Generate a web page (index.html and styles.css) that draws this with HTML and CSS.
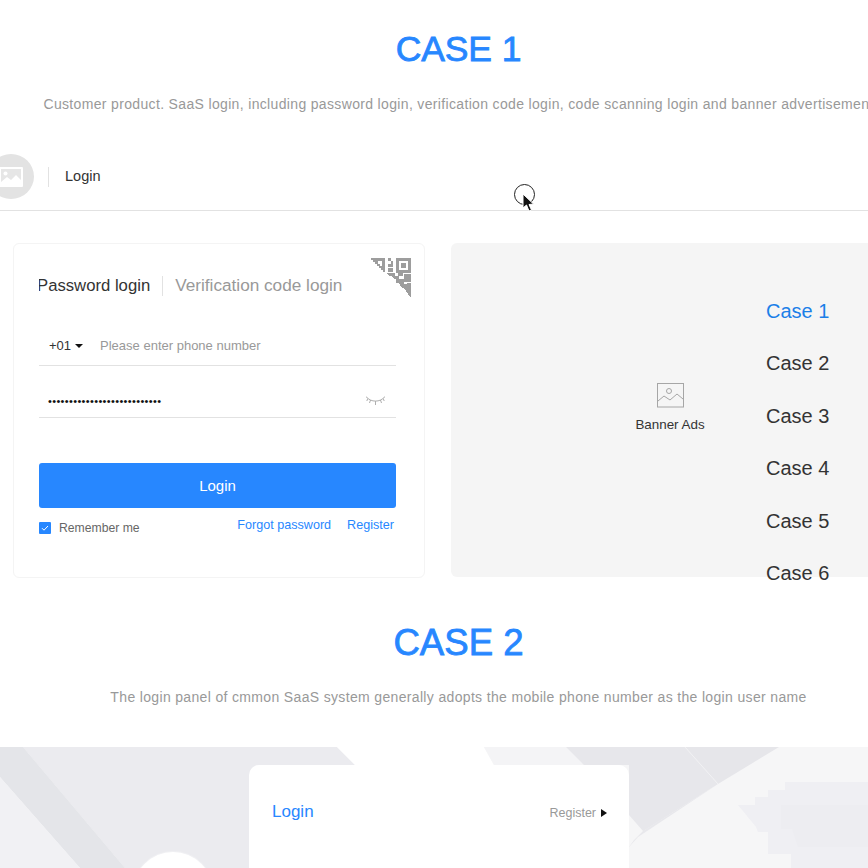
FILE: index.html
```html
<!DOCTYPE html>
<html lang="en">
<head>
<meta charset="utf-8">
<title>Login cases</title>
<link rel="stylesheet" href="styles.css">
</head>
<body>
<div class="page">
  <div class="canvas">
    <header class="case-head case-head-one">
      <h1 class="case-title">CASE 1</h1>
      <p class="case-sub">Customer product. SaaS login, including password login, verification code login, code scanning login and banner advertisement</p>
    </header>

    <div class="topbar">
      <span class="logo">
        <svg width="24" height="20" viewBox="0 0 24 20"><rect width="24" height="20" rx="1" fill="#fff"/><rect x="2" y="2" width="20" height="16" fill="#e6e6e6"/><circle cx="6.500" cy="6.500" r="2" fill="#fff"/><path d="M2 15l6-5 4 3 5-5 5 5v5H2z" fill="#fff"/></svg>
      </span>
      <span class="topbar-sep"></span>
      <span class="topbar-label">Login</span>
    </div>

    <div class="panels">
      <section class="card">
        <svg class="qr" width="40" height="40" viewBox="0 0 40 40" shape-rendering="crispEdges">
          <path fill="#9d9d9d" d="M0 0h14v14h-2v-2h-2v-2H8V8H6V6H4V4H2V2H0z"/>
          <path fill="#fff" d="M7 3h4v5H9V6H7z"/>
          <path fill="#9d9d9d" d="M17 0h3v3h-3zM20 3h2v6h-2zM17 6h3v3h-3zM17 10h5v4h-5z"/>
          <path fill="#9d9d9d" fill-rule="evenodd" d="M25 0h15v15H25zM28 3v9h9V3z"/>
          <path fill="#9d9d9d" d="M30 5h5v5h-5z"/>
          <path fill="#9d9d9d" d="M16 15h8v3h-6zM20 18h8v3h-5zM27 15h5v3h-5zM33 16h7v8h-7zM25 21h8v4h-8zM28 25h12v5H31zM33 30h7v6h-3zM37 36h3v4z"/>
          <path fill="#fff" d="M29 18h3v2h-3zM33 24h3v2h-3z"/>
        </svg>
        <div class="tabs">
          <span class="tab tab-active">Password login</span>
          <span class="tab-sep"></span>
          <span class="tab">Verification code login</span>
        </div>
        <div class="field field-phone">
          <span class="dial">+01</span>
          <span class="caret"></span>
          <span class="placeholder">Please enter phone number</span>
        </div>
        <div class="field field-pass">
          <span class="dots">•••••••••••••••••••••••••••</span>
          <svg class="eye" width="19" height="10" viewBox="0 0 19 10" fill="none" stroke="#9a9a9a" stroke-width=".8"><path d="M1 1.500c2 2.200 5 3.600 8.500 3.600s6.500-1.400 8.500-3.600M1 1.500L0 .8M18 1.500l1-.8M4.500 4l-1 3M9.500 5.200V9M14.500 4l1 3M1.800 2.500L.8 5M17.200 2.500L18.200 5"/></svg>
        </div>
        <button class="login-btn" type="button">Login</button>
        <div class="card-foot">
          <span class="check">
            <svg width="12" height="12" viewBox="0 0 12 12" fill="none" stroke="#fff" stroke-width="1"><path d="M3 6.200l2 2 4-4.200"/></svg>
          </span>
          <span class="remember">Remember me</span>
          <a class="link link-forgot">Forgot password</a>
          <a class="link">Register</a>
        </div>
      </section>

      <section class="banner">
        <div class="banner-ads">
          <svg width="27" height="25" viewBox="0 0 27 25" fill="none" stroke="#a6a6a6" stroke-width="1"><rect x=".5" y=".5" width="26" height="23.500"/><circle cx="12" cy="8" r="2.500"/><path d="M1 18l6-5 6 4 7-6 6 5"/></svg>
          <span class="banner-label">Banner Ads</span>
        </div>
        <ul class="case-list">
          <li class="case-item case-item-active">Case 1</li>
          <li class="case-item">Case 2</li>
          <li class="case-item">Case 3</li>
          <li class="case-item">Case 4</li>
          <li class="case-item">Case 5</li>
          <li class="case-item">Case 6</li>
        </ul>
      </section>
    </div>

    <header class="case-head case-head-two">
      <h1 class="case-title">CASE 2</h1>
      <p class="case-sub">The login panel of cmmon SaaS system generally adopts the mobile phone number as the login user name</p>
    </header>

    <div class="hero">
      <svg class="hero-bg" width="868" height="121" viewBox="0 0 868 121">
        <rect width="868" height="121" fill="#f6f6f7"/>
        <path d="M0 0h337l18 18v103H125L23 0z" fill="#ebebef"/>
        <path d="M0 0h23l102 121H80L0 30z" fill="#e4e5e9"/>
        <path d="M0 30l80 91H0z" fill="#f1f1f4"/>
        <path d="M337 0h147l10 18H355z" fill="#fff"/>
        <path d="M484 0h82l18 18h-90z" fill="#f4f4f6"/>
        <path d="M566 0h119l33 37-89 56V18h-45z" fill="#e7e7eb"/>
        <path d="M685 0h94l-61 37z" fill="#e6e6ea"/>
        <path d="M718 37l-80 53-9 10V68l14 16z" fill="#e8e8ec"/>
        <path d="M629 68l14 16-9 9-5 7z" fill="#f6f6f7"/>
        <path d="M685 0l33 37" stroke="#f1f1f3" stroke-width="1" fill="none"/>
        <path d="M738 58h17v-8h13v-7h17v-8h83v86h-77v-14h-23V85h-10l-2-5z" fill="#efeff3"/>
        <path d="M781 58h87v42h-70l-6-18h-11z" fill="#ededf1"/>
        <circle cx="173" cy="145" r="41" fill="#f0f0f3"/>
        <circle cx="173" cy="145" r="40" fill="#fff"/>
      </svg>
      <section class="login-panel">
        <span class="panel-title">Login</span>
        <span class="panel-reg">Register</span>
        <span class="panel-arrow"></span>
      </section>
    </div>
  </div>

  <div class="cursor">
    <span class="cursor-ring"></span>
    <svg class="cursor-arrow" width="14" height="20" viewBox="0 0 14 20"><path d="M2 1l0 14 3.500-3 2.500 6 2.500-1-2.500-5.500 4.500-.5z" fill="#111" stroke="#fff" stroke-width="1"/></svg>
  </div>
</div>
</body>
</html>
```
FILE: styles.css
```css
* { box-sizing: border-box; }
html, body { margin: 0; padding: 0; background: #fff; }
body { font-family: "Liberation Sans", Arial, sans-serif; color: #333; }
.page { position: relative; width: 868px; height: 868px; overflow: hidden; }
.canvas { width: 917px; }

.case-head { text-align: center; }
.case-head-one { padding-top: 29px; height: 153px; }
.case-head-two { padding-top: 44px; height: 169px; }
.case-title { margin: 0; font-size: 35.500px; line-height: 41px; letter-spacing: -.1px; font-weight: 400; color: #2787ff; -webkit-text-stroke: .8px #2787ff; }
.case-head-two .case-title { font-size: 36.600px; letter-spacing: 0; }
.case-sub { margin: 0; padding-top: 24px; font-size: 14px; line-height: 20px; color: #999; white-space: nowrap; letter-spacing: .34px; }

.topbar { display: flex; align-items: center; height: 58px; margin-bottom: 32px; border-bottom: 1px solid #e2e2e2; padding: 1px 0 11px; width: 868px; }
.logo { flex: none; display: flex; align-items: center; justify-content: center; width: 46px; height: 45px; margin-left: -12px; border-radius: 50%; background: #e3e3e3; }
.topbar-sep { width: 1px; height: 20px; margin-left: 14px; background: #e2e2e2; }
.topbar-label { margin: 0 0 2px 16px; font-size: 14.500px; color: #333; }

.panels { display: flex; gap: 26px; padding-left: 13px; }
.card { position: relative; flex: none; width: 412px; height: 335px; padding: 0 28px 0 25px; border: 1px solid #f4f4f4; border-radius: 6px; background: #fff; }
.qr { position: absolute; top: 14px; right: 13px; }
.tabs { display: flex; align-items: center; height: 20px; margin-top: 32px; overflow: hidden; }
.tab { margin-top: -1px; font-size: 17.200px; color: #999; white-space: nowrap; }
.tab-active { color: #333; margin: -1px 0 0 -2px; font-size: 16.700px; }
.tab-sep { width: 1px; height: 20px; margin: 0 12px; background: #e2e2e2; }
.field { display: flex; align-items: center; border-bottom: 1px solid #e2e2e2; }
.field-phone { height: 44px; margin-top: 26px; padding: 4px 0 0 10px; }
.field-pass { height: 52px; padding: 18px 11px 0 9px; justify-content: space-between; }
.dial { font-size: 13px; color: #333; }
.caret { width: 0; height: 0; margin-left: 4px; border: 4px solid transparent; border-top: 4px solid #111; border-bottom: 0; }
.placeholder { margin-left: 17px; font-size: 13px; color: #999; }
.dots { font-size: 11px; letter-spacing: .35px; color: #111; }
.login-btn { display: block; width: 100%; height: 45px; margin-top: 45px; border: 0; border-radius: 3px; background: #2787ff; color: #fff; font: 15px "Liberation Sans", Arial, sans-serif; }
.card-foot { display: flex; align-items: center; height: 16px; margin-top: 10px; }
.check { flex: none; display: flex; width: 12px; height: 12px; margin-top: 3px; background: #2787ff; border-radius: 1px; }
.remember { margin-left: 8px; margin-top: 3px; font-size: 12.200px; color: #666; }
.link { font-size: 12.600px; color: #2787ff; margin-left: 16px; margin-top: -2px; }
.link-forgot { margin-left: auto; }
.link:last-child { margin-right: 2px; }

.banner { position: relative; flex: none; display: flex; width: 438px; height: 334px; border-radius: 6px; background: #f5f5f5; }
.banner-ads { position: absolute; top: 140px; left: 0; width: 438px; display: flex; flex-direction: column; align-items: center; }
.banner-label { margin-top: 9px; font-size: 13.400px; color: #333; }
.case-list { position: absolute; left: 315px; top: 55px; margin: 0; padding: 0; list-style: none; }
.case-item { height: 52.400px; font-size: 20px; line-height: 26px; color: #333; }
.case-item-active { color: #1b7fe8; }

.hero { position: relative; height: 121px; width: 868px; overflow: hidden; }
.hero-bg { position: absolute; top: 0; left: 0; display: block; }
.login-panel { position: absolute; top: 18px; left: 249px; width: 380px; height: 200px; border-radius: 10px 10px 0 0; background: #fff; }
.panel-title { position: absolute; left: 23px; top: 37px; font-size: 17px; color: #2787ff; }
.panel-reg { position: absolute; right: 33px; top: 41px; font-size: 12.500px; color: #999; }
.panel-arrow { position: absolute; right: 22px; top: 44px; width: 0; height: 0; border: 4px solid transparent; border-left: 6px solid #111; border-right: 0; }

.cursor { position: absolute; left: 514px; top: 184px; width: 30px; height: 30px; }
.cursor-ring { position: absolute; left: 0; top: 0; width: 21px; height: 21px; border: 1px solid #222; border-radius: 50%; }
.cursor-arrow { position: absolute; left: 7px; top: 9px; }
```
